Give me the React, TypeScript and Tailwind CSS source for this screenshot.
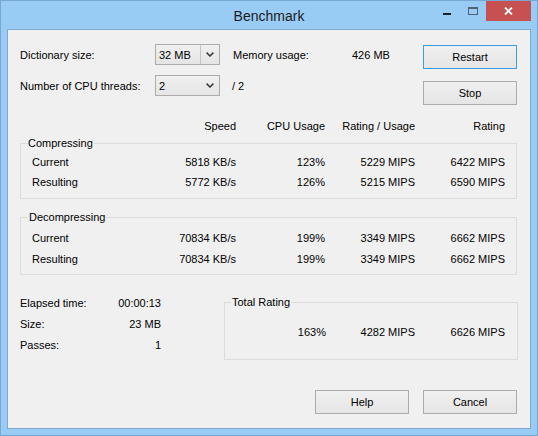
import React from "react";

function Btn({ label, def = false, className = "" }: { label: string; def?: boolean; className?: string }) {
  return (
    <div
      className={`w-[94px] h-[24px] flex items-center justify-center border bg-gradient-to-b from-[#f0f0f0] to-[#e5e5e5] ${
        def ? "border-[#3c9be8]" : "border-[#acacac]"
      } ${className}`}
    >
      {label}
    </div>
  );
}

function Combo({ value, sep = false }: { value: string; sep?: boolean }) {
  return (
    <div className="w-[65px] h-[21px] flex items-stretch border border-[#acacac] bg-gradient-to-b from-[#f0f0f0] to-[#e5e5e5]">
      <div className="flex-1 flex items-center pl-[3px]">{value}</div>
      <div className={`w-[19px] flex items-center justify-center ${sep ? "border-l border-[#c4c4c4]" : ""}`}>
        <svg width="8" height="5" viewBox="0 0 8 5">
          <path d="M0.6 0.6 L4 4 L7.4 0.6" fill="none" stroke="#3a3a3a" strokeWidth="1.5" />
        </svg>
      </div>
    </div>
  );
}

function Row({ cells, h = "h-[20px]" }: { cells: string[]; h?: string }) {
  return (
    <div className={`grid grid-cols-[124px_80px_89px_90px_90px] items-center ${h}`}>
      <div>{cells[0]}</div>
      <div className="text-right">{cells[1]}</div>
      <div className="text-right">{cells[2]}</div>
      <div className="text-right">{cells[3]}</div>
      <div className="text-right">{cells[4]}</div>
    </div>
  );
}

export default function App() {
  return (
    <div className="w-[538px] h-[436px] bg-[#99ccf4] border border-[#78a8d2] flex flex-col font-['Liberation_Sans',Arial,sans-serif] text-[11px] leading-[14px] text-black overflow-hidden">
      {/* Title bar */}
      <div className="relative h-[28px] flex items-center justify-center">
        <span className="text-[14px] text-[#1b1b1b] leading-[18px] pt-[1px]">Benchmark</span>
        <div className="absolute right-[6px] top-0 flex items-start">
          <div className="w-[26px] h-[20px] flex justify-center">
            <div className="mt-[12px] w-[8px] h-[2px] bg-[#1e1e1e]" />
          </div>
          <div className="w-[26px] h-[20px] flex justify-center">
            <div className="mt-[6px] w-[10px] h-[8px] border border-[#4f6273] border-t-2" />
          </div>
          <div className="w-[45px] h-[20px] bg-[#c75050] flex items-center justify-center">
            <svg width="9" height="8" viewBox="0 0 9 8">
              <path d="M1 0.5 L8 7.5 M8 0.5 L1 7.5" stroke="#ffffff" strokeWidth="1.8" />
            </svg>
          </div>
        </div>
      </div>

      {/* Client area */}
      <div className="mx-[6px] w-[524px] h-[400px] border border-[#7fa9cf] bg-[#f0f0f0] flex flex-col">
        {/* Top section */}
        <div className="flex pl-[12px] pt-[14px]">
          <div className="w-[403px] flex flex-col gap-[10px]">
            <div className="flex items-center h-[21px]">
              <div className="w-[135px]">Dictionary size:</div>
              <Combo value="32 MB" sep />
              <div className="ml-[13px] w-[119px]">Memory usage:</div>
              <div>426 MB</div>
            </div>
            <div className="flex items-center h-[21px]">
              <div className="w-[135px]">Number of CPU threads:</div>
              <Combo value="2" />
              <div className="ml-[12px]">/ 2</div>
            </div>
          </div>
          <div className="mt-[1px] flex flex-col gap-[12px]">
            <Btn label="Restart" def />
            <Btn label="Stop" />
          </div>
        </div>

        {/* Header */}
        <div className="mt-[11px] ml-[24px]">
          <Row cells={["", "Speed", "CPU Usage", "Rating / Usage", "Rating"]} />
        </div>

        {/* Compressing */}
        <fieldset className="ml-[12px] w-[497px] border border-[#dcdcdc] pb-[6px]">
          <legend className="ml-[6px] px-[1px] leading-[14px]">Compressing</legend>
          <div className="mt-[2px] pl-[11px]">
            <Row cells={["Current", "5818 KB/s", "123%", "5229 MIPS", "6422 MIPS"]} />
            <Row cells={["Resulting", "5772 KB/s", "126%", "5215 MIPS", "6590 MIPS"]} />
          </div>
        </fieldset>

        {/* Decompressing */}
        <fieldset className="mt-[11px] ml-[12px] w-[497px] border border-[#dcdcdc] pb-[5px]">
          <legend className="ml-[7px] px-[1px] leading-[14px]">Decompressing</legend>
          <div className="mt-[3px] pl-[11px]">
            <Row h="h-[21px]" cells={["Current", "70834 KB/s", "199%", "3349 MIPS", "6662 MIPS"]} />
            <Row h="h-[21px]" cells={["Resulting", "70834 KB/s", "199%", "3349 MIPS", "6662 MIPS"]} />
          </div>
        </fieldset>

        {/* Bottom section */}
        <div className="mt-[17px] flex items-start">
          <div className="ml-[12px] w-[141px] flex flex-col">
            <div className="h-[21px] flex items-center justify-between">
              <span>Elapsed time:</span>
              <span>00:00:13</span>
            </div>
            <div className="h-[21px] flex items-center justify-between">
              <span>Size:</span>
              <span>23 MB</span>
            </div>
            <div className="h-[21px] flex items-center justify-between">
              <span>Passes:</span>
              <span>1</span>
            </div>
          </div>
          <fieldset className="mt-[3px] ml-[63px] w-[294px] border border-[#dcdcdc] pb-[17px]">
            <legend className="ml-[6px] px-[1px] leading-[14px]">Total Rating</legend>
            <div className="mt-[13px] h-[20px] grid grid-cols-[101px_89px_90px] items-center">
              <div className="text-right">163%</div>
              <div className="text-right">4282 MIPS</div>
              <div className="text-right">6626 MIPS</div>
            </div>
          </fieldset>
        </div>

        {/* Buttons */}
        <div className="mt-auto pb-[14px] pr-[13px] flex justify-end gap-[14px]">
          <Btn label="Help" />
          <Btn label="Cancel" />
        </div>
      </div>
    </div>
  );
}
